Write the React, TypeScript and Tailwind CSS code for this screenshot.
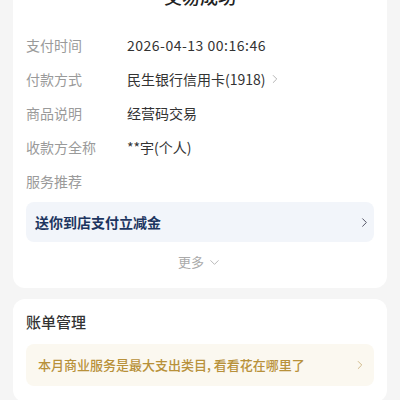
import { ChevronRight, ChevronDown } from 'lucide-react'

const rows = [
    { label: '支付时间', value: '2026-04-13 00:16:46', wide: true },
    { label: '付款方式', value: '民生银行信用卡(1918)', arrow: true },
    { label: '商品说明', value: '经营码交易' },
    { label: '收款方全称', value: '**宇(个人)' },
    { label: '服务推荐', value: '' },
]

export default function App() {
    return (
        <div
            className="h-[400px] overflow-hidden bg-[#f5f5f5] px-[13px]"
            style={{ fontFamily: '"Noto Sans CJK SC", "Noto Sans", sans-serif' }}
        >
            <div className="-mt-[30px] rounded-xl bg-white px-[13px] pt-[13px] pb-[16px]">
                <div className="text-center text-[18px] leading-[26px] font-medium text-[#222]">交易成功</div>
                <div className="mt-[19px]">
                    {rows.map((r) => (
                        <div key={r.label} className="flex h-[34px] items-center text-[14px]">
                            <div className="w-[101px] text-[#9a9a9a]">{r.label}</div>
                            <div className={`flex items-center text-[#333] ${r.wide ? 'tracking-[0.5px]' : ''}`}>
                                {r.value}
                                {r.arrow && <ChevronRight className="ml-[2px] h-[14px] w-[14px] text-[#aaa]" strokeWidth={1.5} />}
                            </div>
                        </div>
                    ))}
                </div>
                <div className="mt-[4px] flex h-[40px] items-center justify-between rounded-lg bg-[#f2f5fa] pl-[9px] pr-[2px]">
                    <span className="text-[14px] font-bold text-[#1d3560]">送你到店支付立减金</span>
                    <ChevronRight className="h-[15px] w-[15px] text-[#556]" strokeWidth={1.6} />
                </div>
                <div className="mt-[10px] flex h-[20px] items-center justify-center text-[13px] text-[#aaa]">
                    更多
                    <ChevronDown className="ml-[3px] h-[15px] w-[15px]" strokeWidth={1.3} />
                </div>
            </div>
            <div className="mt-[11px] rounded-xl bg-white px-[13px] pt-[12px] pb-[16px]">
                <div className="text-[15px] leading-[22px] font-medium text-[#333]">账单管理</div>
                <div className="mt-[11px] flex h-[42px] items-center justify-between rounded-lg bg-[#fbf8f0] pl-[12px] pr-[7px]">
                    <span className="text-[13px] font-medium text-[#b8913a]">本月商业服务是最大支出类目, 看看花在哪里了</span>
                    <ChevronRight className="h-[14px] w-[14px] text-[#c9b07a]" strokeWidth={1.5} />
                </div>
            </div>
        </div>
    )
}
